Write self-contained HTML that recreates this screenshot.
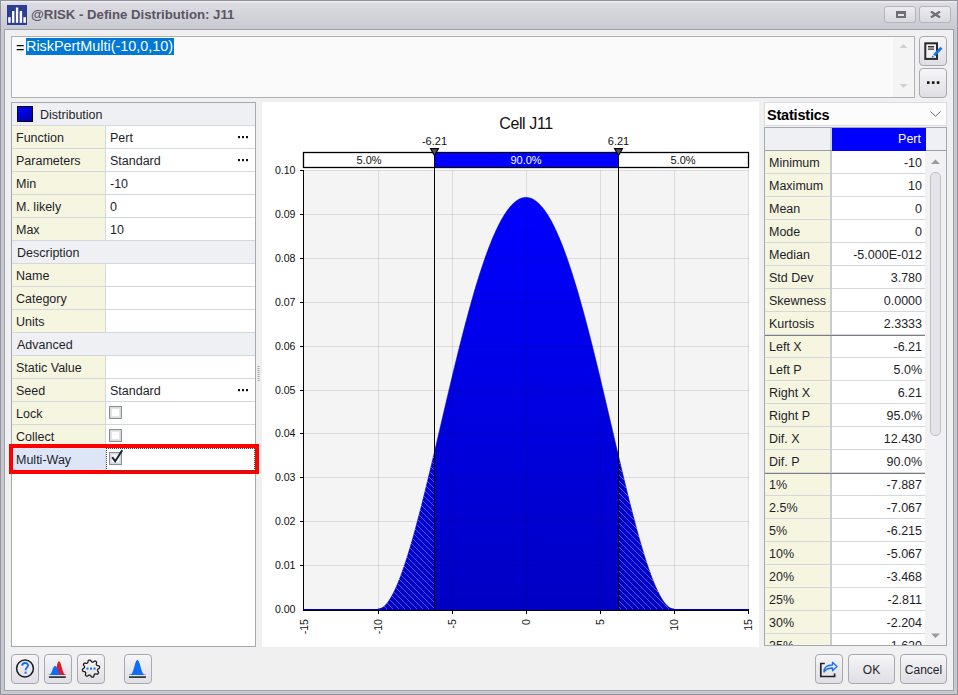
<!DOCTYPE html><html><head><meta charset="utf-8"><style>

*{box-sizing:border-box;margin:0;padding:0}
html,body{width:958px;height:695px;overflow:hidden;background:#c6c6ce}
body{font-family:"Liberation Sans",sans-serif;position:relative;color:#1e1e2a}
.a{position:absolute}
.t{position:absolute;white-space:nowrap;font-size:12.5px;line-height:23px}
.btn{position:absolute;border:1px solid #a8a8b0;border-radius:3px;background:linear-gradient(#f6f6f8,#dedee4)}

</style></head><body>
<div class="a" style="left:0;top:0;width:958px;height:695px;border:1px solid #92929c;background:linear-gradient(#ececf0 0px,#ececf0 1px,#dcdce2 2px,#c9c9d1 28px,#c8c8d0 30px,#c8c8d0 100%)"></div>
<div class="a" style="left:4px;top:29px;width:950px;height:662px;background:#f0f0f0;border:1px solid #a0a0ac"></div>
<svg class="a" style="left:7px;top:5px" width="20" height="20" viewBox="0 0 20 20"><rect width="20" height="20" fill="#2c3e94"/><rect x="1.2" y="12.2" width="2.5" height="5.6" fill="#fff"/><rect x="5" y="6" width="2.4" height="11.8" fill="#fff"/><rect x="8.9" y="2.5" width="2.3" height="15.3" fill="#fff"/><rect x="12.7" y="6" width="2.4" height="11.8" fill="#fff"/><rect x="16.4" y="12.2" width="2.5" height="5.6" fill="#fff"/></svg>
<div class="t" style="left:31px;top:4px;line-height:22px;font-size:13.2px;font-weight:bold;color:#5c5464">@RISK - Define Distribution: J11</div>
<div class="btn" style="left:884px;top:6px;width:32px;height:17px;border-radius:3px;border-color:#b4b4bc;background:linear-gradient(#ececf0,#d8d8de)"></div>
<div class="a" style="left:896px;top:11px;width:10px;height:7px;border:2px solid #6e6e78;border-top-width:3px"></div>
<div class="btn" style="left:919px;top:6px;width:32px;height:17px;border-color:#b4b4bc;background:linear-gradient(#ececf0,#d8d8de)"></div>
<svg class="a" style="left:930px;top:11px" width="11" height="7" viewBox="0 0 11 7"><path d="M1,0.5 L10,6.5 M10,0.5 L1,6.5" stroke="#6e6e78" stroke-width="2.3"/></svg>
<div class="a" style="left:11px;top:36px;width:904px;height:62px;background:#fafafa;border:1px solid #aeb0b8"></div>
<div class="a" style="left:893px;top:37px;width:21px;height:60px;background:#f4f4f4"></div>
<svg class="a" style="left:899px;top:43px" width="9" height="50"><path d="M0.5,5 L4.5,1 L8.5,5Z" fill="#d0d0d4"/><path d="M0.5,41 L4.5,45 L8.5,41Z" fill="#d0d0d4"/></svg>
<div class="t" style="left:16px;top:39px;height:18px;line-height:18px;font-size:14.4px;color:#000">=</div>
<div class="t" style="left:26px;top:38px;height:17px;line-height:17px;font-size:14.4px;color:#fff;background:#0078d7;padding-right:1px">RiskPertMulti(-10,0,10)</div>
<div class="btn" style="left:919px;top:36px;width:28px;height:30px;border-radius:4px"></div>
<svg class="a" style="left:923px;top:41px" width="20" height="20" viewBox="0 0 20 20"><rect x="2.3" y="2.3" width="11.7" height="15.6" fill="#f2f2f2" stroke="#2a2a2a" stroke-width="2"/><path d="M5,5.7 H11 M5,8.1 H11" stroke="#333" stroke-width="1.4"/><path d="M11.2,14.2 L18.4,6.8" stroke="#1a73e8" stroke-width="2.8"/><path d="M9.2,16.3 L10.4,15.1" stroke="#1a73e8" stroke-width="1.6"/></svg>
<div class="btn" style="left:919px;top:68px;width:28px;height:30px;border-radius:4px"></div>
<svg class="a" style="left:927px;top:81px" width="13" height="4"><rect x="0" y="0.3" width="2.6" height="2.6" fill="#111"/><rect x="4.9" y="0.3" width="2.6" height="2.6" fill="#111"/><rect x="9.8" y="0.3" width="2.6" height="2.6" fill="#111"/></svg>
<div class="a" style="left:11px;top:102px;width:245px;height:545px;background:#fff;border:1px solid #a4a8b2"></div>
<div class="a" style="left:12px;top:103px;width:243px;height:23px;background:#eef0f3;border-bottom:1px solid #d4d8de"></div>
<div class="t" style="left:40px;top:104px;height:22px;line-height:22px">Distribution</div>
<div class="a" style="left:17px;top:106px;width:16px;height:16px;border:1.5px solid #000;background:linear-gradient(135deg,#0000ff,#0000a8)"></div>
<div class="a" style="left:12px;top:126px;width:93px;height:23px;background:#f5f5e0;border-bottom:1px solid #d4d8de"></div>
<div class="a" style="left:105px;top:126px;width:1px;height:23px;background:#d4d8de"></div>
<div class="a" style="left:106px;top:126px;width:149px;height:23px;background:#fff;border-bottom:1px solid #d4d8de"></div>
<div class="t" style="left:16px;top:127px;height:22px;line-height:22px;color:#1e1e2a">Function</div>
<div class="t" style="left:110px;top:127px;height:22px;line-height:22px">Pert</div>
<svg class="a" style="left:236px;top:136px" width="13" height="3"><rect x="2" y="0" width="2" height="2.2" fill="#111"/><rect x="6" y="0" width="2" height="2.2" fill="#111"/><rect x="10" y="0" width="2" height="2.2" fill="#111"/></svg>
<div class="a" style="left:12px;top:149px;width:93px;height:23px;background:#f5f5e0;border-bottom:1px solid #d4d8de"></div>
<div class="a" style="left:105px;top:149px;width:1px;height:23px;background:#d4d8de"></div>
<div class="a" style="left:106px;top:149px;width:149px;height:23px;background:#fff;border-bottom:1px solid #d4d8de"></div>
<div class="t" style="left:16px;top:150px;height:22px;line-height:22px;color:#1e1e2a">Parameters</div>
<div class="t" style="left:110px;top:150px;height:22px;line-height:22px">Standard</div>
<svg class="a" style="left:236px;top:159px" width="13" height="3"><rect x="2" y="0" width="2" height="2.2" fill="#111"/><rect x="6" y="0" width="2" height="2.2" fill="#111"/><rect x="10" y="0" width="2" height="2.2" fill="#111"/></svg>
<div class="a" style="left:12px;top:172px;width:93px;height:23px;background:#f5f5e0;border-bottom:1px solid #d4d8de"></div>
<div class="a" style="left:105px;top:172px;width:1px;height:23px;background:#d4d8de"></div>
<div class="a" style="left:106px;top:172px;width:149px;height:23px;background:#fff;border-bottom:1px solid #d4d8de"></div>
<div class="t" style="left:16px;top:173px;height:22px;line-height:22px;color:#1e1e2a">Min</div>
<div class="t" style="left:110px;top:173px;height:22px;line-height:22px">-10</div>
<div class="a" style="left:12px;top:195px;width:93px;height:23px;background:#f5f5e0;border-bottom:1px solid #d4d8de"></div>
<div class="a" style="left:105px;top:195px;width:1px;height:23px;background:#d4d8de"></div>
<div class="a" style="left:106px;top:195px;width:149px;height:23px;background:#fff;border-bottom:1px solid #d4d8de"></div>
<div class="t" style="left:16px;top:196px;height:22px;line-height:22px;color:#1e1e2a">M. likely</div>
<div class="t" style="left:110px;top:196px;height:22px;line-height:22px">0</div>
<div class="a" style="left:12px;top:218px;width:93px;height:23px;background:#f5f5e0;border-bottom:1px solid #d4d8de"></div>
<div class="a" style="left:105px;top:218px;width:1px;height:23px;background:#d4d8de"></div>
<div class="a" style="left:106px;top:218px;width:149px;height:23px;background:#fff;border-bottom:1px solid #d4d8de"></div>
<div class="t" style="left:16px;top:219px;height:22px;line-height:22px;color:#1e1e2a">Max</div>
<div class="t" style="left:110px;top:219px;height:22px;line-height:22px">10</div>
<div class="a" style="left:12px;top:241px;width:243px;height:23px;background:#eef0f3;border-bottom:1px solid #d4d8de"></div>
<div class="t" style="left:17px;top:242px;height:22px;line-height:22px">Description</div>
<div class="a" style="left:12px;top:264px;width:93px;height:23px;background:#f5f5e0;border-bottom:1px solid #d4d8de"></div>
<div class="a" style="left:105px;top:264px;width:1px;height:23px;background:#d4d8de"></div>
<div class="a" style="left:106px;top:264px;width:149px;height:23px;background:#fff;border-bottom:1px solid #d4d8de"></div>
<div class="t" style="left:16px;top:265px;height:22px;line-height:22px;color:#1e1e2a">Name</div>
<div class="a" style="left:12px;top:287px;width:93px;height:23px;background:#f5f5e0;border-bottom:1px solid #d4d8de"></div>
<div class="a" style="left:105px;top:287px;width:1px;height:23px;background:#d4d8de"></div>
<div class="a" style="left:106px;top:287px;width:149px;height:23px;background:#fff;border-bottom:1px solid #d4d8de"></div>
<div class="t" style="left:16px;top:288px;height:22px;line-height:22px;color:#1e1e2a">Category</div>
<div class="a" style="left:12px;top:310px;width:93px;height:23px;background:#f5f5e0;border-bottom:1px solid #d4d8de"></div>
<div class="a" style="left:105px;top:310px;width:1px;height:23px;background:#d4d8de"></div>
<div class="a" style="left:106px;top:310px;width:149px;height:23px;background:#fff;border-bottom:1px solid #d4d8de"></div>
<div class="t" style="left:16px;top:311px;height:22px;line-height:22px;color:#1e1e2a">Units</div>
<div class="a" style="left:12px;top:333px;width:243px;height:23px;background:#eef0f3;border-bottom:1px solid #d4d8de"></div>
<div class="t" style="left:17px;top:334px;height:22px;line-height:22px">Advanced</div>
<div class="a" style="left:12px;top:356px;width:93px;height:23px;background:#f5f5e0;border-bottom:1px solid #d4d8de"></div>
<div class="a" style="left:105px;top:356px;width:1px;height:23px;background:#d4d8de"></div>
<div class="a" style="left:106px;top:356px;width:149px;height:23px;background:#fff;border-bottom:1px solid #d4d8de"></div>
<div class="t" style="left:16px;top:357px;height:22px;line-height:22px;color:#1e1e2a">Static Value</div>
<div class="a" style="left:12px;top:379px;width:93px;height:23px;background:#f5f5e0;border-bottom:1px solid #d4d8de"></div>
<div class="a" style="left:105px;top:379px;width:1px;height:23px;background:#d4d8de"></div>
<div class="a" style="left:106px;top:379px;width:149px;height:23px;background:#fff;border-bottom:1px solid #d4d8de"></div>
<div class="t" style="left:16px;top:380px;height:22px;line-height:22px;color:#1e1e2a">Seed</div>
<div class="t" style="left:110px;top:380px;height:22px;line-height:22px">Standard</div>
<svg class="a" style="left:236px;top:389px" width="13" height="3"><rect x="2" y="0" width="2" height="2.2" fill="#111"/><rect x="6" y="0" width="2" height="2.2" fill="#111"/><rect x="10" y="0" width="2" height="2.2" fill="#111"/></svg>
<div class="a" style="left:12px;top:402px;width:93px;height:23px;background:#f5f5e0;border-bottom:1px solid #d4d8de"></div>
<div class="a" style="left:105px;top:402px;width:1px;height:23px;background:#d4d8de"></div>
<div class="a" style="left:106px;top:402px;width:149px;height:23px;background:#fff;border-bottom:1px solid #d4d8de"></div>
<div class="t" style="left:16px;top:403px;height:22px;line-height:22px;color:#1e1e2a">Lock</div>
<div class="a" style="left:109px;top:406px;width:13px;height:13px;border:1px solid #8c8e98;background:#d8dae0"></div>
<div class="a" style="left:111px;top:408px;width:9px;height:9px;background:#fff;border:1px solid #e4e6ea"></div>
<div class="a" style="left:12px;top:425px;width:93px;height:23px;background:#f5f5e0;border-bottom:1px solid #d4d8de"></div>
<div class="a" style="left:105px;top:425px;width:1px;height:23px;background:#d4d8de"></div>
<div class="a" style="left:106px;top:425px;width:149px;height:23px;background:#fff;border-bottom:1px solid #d4d8de"></div>
<div class="t" style="left:16px;top:426px;height:22px;line-height:22px;color:#1e1e2a">Collect</div>
<div class="a" style="left:109px;top:429px;width:13px;height:13px;border:1px solid #8c8e98;background:#d8dae0"></div>
<div class="a" style="left:111px;top:431px;width:9px;height:9px;background:#fff;border:1px solid #e4e6ea"></div>
<div class="a" style="left:12px;top:448px;width:93px;height:23px;background:#dde6f6;border-bottom:1px solid #d4d8de"></div>
<div class="a" style="left:105px;top:448px;width:1px;height:23px;background:#d4d8de"></div>
<div class="a" style="left:106px;top:448px;width:149px;height:23px;background:#fff;border-bottom:1px solid #d4d8de"></div>
<div class="t" style="left:16px;top:449px;height:22px;line-height:22px;color:#1e1e2a">Multi-Way</div>
<div class="a" style="left:109px;top:452px;width:13px;height:13px;border:1px solid #8c8e98;background:#d8dae0"></div>
<div class="a" style="left:111px;top:454px;width:9px;height:9px;background:#fff;border:1px solid #e4e6ea"></div>
<svg class="a" style="left:109px;top:449px" width="15" height="15"><path d="M3.2,8.2 L6.2,12.3 L13.2,1.2" fill="none" stroke="#1c2440" stroke-width="2"/></svg>
<div class="a" style="left:9px;top:444px;width:250px;height:30px;border:4px solid #ff0000"></div>
<div class="a" style="left:106px;top:448px;width:149px;height:23px;border:1px dotted #444"></div>
<svg class="a" style="left:257px;top:366px" width="3" height="16"><rect x="0.5" y="0" width="2" height="1" fill="#a0a0a8"/><rect x="0.5" y="2" width="2" height="1" fill="#a0a0a8"/><rect x="0.5" y="4" width="2" height="1" fill="#a0a0a8"/><rect x="0.5" y="6" width="2" height="1" fill="#a0a0a8"/><rect x="0.5" y="8" width="2" height="1" fill="#a0a0a8"/><rect x="0.5" y="10" width="2" height="1" fill="#a0a0a8"/><rect x="0.5" y="12" width="2" height="1" fill="#a0a0a8"/><rect x="0.5" y="14" width="2" height="1" fill="#a0a0a8"/></svg>
<div class="a" style="left:262px;top:102px;width:497px;height:545px;background:#fff"></div>
<svg class="a" style="left:0;top:0" width="958" height="695" viewBox="0 0 958 695"><defs><linearGradient id="fg" gradientUnits="userSpaceOnUse" x1="0" y1="198" x2="0" y2="609"><stop offset="0" stop-color="#0000ff"/><stop offset="1" stop-color="#0000c4"/></linearGradient><pattern id="hp" patternUnits="userSpaceOnUse" x="0" y="0" width="6" height="6"><rect x="0" y="0" width="1" height="1" fill="rgba(255,255,255,0.32)"/><rect x="1" y="1" width="1" height="1" fill="rgba(255,255,255,0.32)"/><rect x="2" y="2" width="1" height="1" fill="rgba(255,255,255,0.32)"/><rect x="3" y="3" width="1" height="1" fill="rgba(255,255,255,0.32)"/><rect x="4" y="4" width="1" height="1" fill="rgba(255,255,255,0.32)"/><rect x="5" y="5" width="1" height="1" fill="rgba(255,255,255,0.32)"/></pattern></defs><rect x="304" y="170" width="445" height="440" fill="#f4f4f4"/><path d="M378.00,609 L378.00,609.00 L378.59,608.97 L379.18,608.90 L379.78,608.77 L380.37,608.59 L380.96,608.35 L381.55,608.07 L382.14,607.75 L382.74,607.37 L383.33,606.94 L383.92,606.47 L384.51,605.95 L385.10,605.39 L385.70,604.78 L386.29,604.12 L386.88,603.42 L387.47,602.68 L388.06,601.90 L388.66,601.07 L389.25,600.20 L389.84,599.29 L390.43,598.34 L391.02,597.35 L391.62,596.32 L392.21,595.25 L392.80,594.14 L393.39,593.00 L393.98,591.82 L394.58,590.60 L395.17,589.34 L395.76,588.05 L396.35,586.73 L396.94,585.37 L397.54,583.98 L398.13,582.55 L398.72,581.09 L399.31,579.60 L399.90,578.08 L400.50,576.53 L401.09,574.94 L401.68,573.33 L402.27,571.69 L402.86,570.01 L403.46,568.31 L404.05,566.59 L404.64,564.83 L405.23,563.05 L405.82,561.24 L406.42,559.41 L407.01,557.55 L407.60,555.66 L408.19,553.75 L408.78,551.82 L409.38,549.87 L409.97,547.89 L410.56,545.89 L411.15,543.86 L411.74,541.82 L412.34,539.76 L412.93,537.67 L413.52,535.57 L414.11,533.44 L414.70,531.30 L415.30,529.14 L415.89,526.96 L416.48,524.77 L417.07,522.55 L417.66,520.33 L418.26,518.08 L418.85,515.82 L419.44,513.54 L420.03,511.25 L420.62,508.95 L421.22,506.63 L421.81,504.30 L422.40,501.95 L422.99,499.60 L423.58,497.23 L424.18,494.85 L424.77,492.45 L425.36,490.05 L425.95,487.64 L426.54,485.22 L427.14,482.79 L427.73,480.35 L428.32,477.90 L428.91,475.44 L429.50,472.98 L430.10,470.50 L430.69,468.03 L431.28,465.54 L431.87,463.05 L432.46,460.55 L433.06,458.05 L433.65,455.54 L434.24,453.03 L434.83,450.52 L435.42,448.00 L436.02,445.48 L436.61,442.95 L437.20,440.42 L437.79,437.89 L438.38,435.36 L438.98,432.83 L439.57,430.30 L440.16,427.76 L440.75,425.23 L441.34,422.69 L441.94,420.16 L442.53,417.63 L443.12,415.09 L443.71,412.56 L444.30,410.04 L444.90,407.51 L445.49,404.99 L446.08,402.47 L446.67,399.95 L447.26,397.43 L447.86,394.92 L448.45,392.42 L449.04,389.92 L449.63,387.42 L450.22,384.93 L450.82,382.45 L451.41,379.97 L452.00,377.50 L452.59,375.03 L453.18,372.57 L453.78,370.12 L454.37,367.67 L454.96,365.24 L455.55,362.81 L456.14,360.39 L456.74,357.98 L457.33,355.58 L457.92,353.18 L458.51,350.80 L459.10,348.43 L459.70,346.06 L460.29,343.71 L460.88,341.37 L461.47,339.04 L462.06,336.72 L462.66,334.41 L463.25,332.11 L463.84,329.83 L464.43,327.56 L465.02,325.30 L465.62,323.05 L466.21,320.82 L466.80,318.60 L467.39,316.40 L467.98,314.20 L468.58,312.03 L469.17,309.86 L469.76,307.72 L470.35,305.58 L470.94,303.46 L471.54,301.36 L472.13,299.27 L472.72,297.20 L473.31,295.15 L473.90,293.11 L474.50,291.09 L475.09,289.08 L475.68,287.09 L476.27,285.12 L476.86,283.17 L477.46,281.23 L478.05,279.31 L478.64,277.41 L479.23,275.53 L479.82,273.66 L480.42,271.82 L481.01,269.99 L481.60,268.19 L482.19,266.40 L482.78,264.63 L483.38,262.88 L483.97,261.15 L484.56,259.44 L485.15,257.75 L485.74,256.08 L486.34,254.43 L486.93,252.81 L487.52,251.20 L488.11,249.61 L488.70,248.05 L489.30,246.51 L489.89,244.98 L490.48,243.48 L491.07,242.01 L491.66,240.55 L492.26,239.11 L492.85,237.70 L493.44,236.31 L494.03,234.95 L494.62,233.60 L495.22,232.28 L495.81,230.98 L496.40,229.70 L496.99,228.45 L497.58,227.22 L498.18,226.02 L498.77,224.83 L499.36,223.67 L499.95,222.54 L500.54,221.43 L501.14,220.34 L501.73,219.28 L502.32,218.24 L502.91,217.23 L503.50,216.24 L504.10,215.27 L504.69,214.33 L505.28,213.41 L505.87,212.52 L506.46,211.65 L507.06,210.81 L507.65,210.00 L508.24,209.21 L508.83,208.44 L509.42,207.70 L510.02,206.98 L510.61,206.29 L511.20,205.63 L511.79,204.99 L512.38,204.37 L512.98,203.79 L513.57,203.22 L514.16,202.69 L514.75,202.18 L515.34,201.69 L515.94,201.23 L516.53,200.80 L517.12,200.40 L517.71,200.01 L518.30,199.66 L518.90,199.33 L519.49,199.03 L520.08,198.75 L520.67,198.50 L521.26,198.28 L521.86,198.08 L522.45,197.91 L523.04,197.77 L523.63,197.65 L524.22,197.56 L524.82,197.49 L525.41,197.45 L526.00,197.44 L526.59,197.45 L527.18,197.49 L527.78,197.56 L528.37,197.65 L528.96,197.77 L529.55,197.91 L530.14,198.08 L530.74,198.28 L531.33,198.50 L531.92,198.75 L532.51,199.03 L533.10,199.33 L533.70,199.66 L534.29,200.01 L534.88,200.40 L535.47,200.80 L536.06,201.23 L536.66,201.69 L537.25,202.18 L537.84,202.69 L538.43,203.22 L539.02,203.79 L539.62,204.37 L540.21,204.99 L540.80,205.63 L541.39,206.29 L541.98,206.98 L542.58,207.70 L543.17,208.44 L543.76,209.21 L544.35,210.00 L544.94,210.81 L545.54,211.65 L546.13,212.52 L546.72,213.41 L547.31,214.33 L547.90,215.27 L548.50,216.24 L549.09,217.23 L549.68,218.24 L550.27,219.28 L550.86,220.34 L551.46,221.43 L552.05,222.54 L552.64,223.67 L553.23,224.83 L553.82,226.02 L554.42,227.22 L555.01,228.45 L555.60,229.70 L556.19,230.98 L556.78,232.28 L557.38,233.60 L557.97,234.95 L558.56,236.31 L559.15,237.70 L559.74,239.11 L560.34,240.55 L560.93,242.01 L561.52,243.48 L562.11,244.98 L562.70,246.51 L563.30,248.05 L563.89,249.61 L564.48,251.20 L565.07,252.81 L565.66,254.43 L566.26,256.08 L566.85,257.75 L567.44,259.44 L568.03,261.15 L568.62,262.88 L569.22,264.63 L569.81,266.40 L570.40,268.19 L570.99,269.99 L571.58,271.82 L572.18,273.66 L572.77,275.53 L573.36,277.41 L573.95,279.31 L574.54,281.23 L575.14,283.17 L575.73,285.12 L576.32,287.09 L576.91,289.08 L577.50,291.09 L578.10,293.11 L578.69,295.15 L579.28,297.20 L579.87,299.27 L580.46,301.36 L581.06,303.46 L581.65,305.58 L582.24,307.72 L582.83,309.86 L583.42,312.03 L584.02,314.20 L584.61,316.40 L585.20,318.60 L585.79,320.82 L586.38,323.05 L586.98,325.30 L587.57,327.56 L588.16,329.83 L588.75,332.11 L589.34,334.41 L589.94,336.72 L590.53,339.04 L591.12,341.37 L591.71,343.71 L592.30,346.06 L592.90,348.43 L593.49,350.80 L594.08,353.18 L594.67,355.58 L595.26,357.98 L595.86,360.39 L596.45,362.81 L597.04,365.24 L597.63,367.67 L598.22,370.12 L598.82,372.57 L599.41,375.03 L600.00,377.50 L600.59,379.97 L601.18,382.45 L601.78,384.93 L602.37,387.42 L602.96,389.92 L603.55,392.42 L604.14,394.92 L604.74,397.43 L605.33,399.95 L605.92,402.47 L606.51,404.99 L607.10,407.51 L607.70,410.04 L608.29,412.56 L608.88,415.09 L609.47,417.63 L610.06,420.16 L610.66,422.69 L611.25,425.23 L611.84,427.76 L612.43,430.30 L613.02,432.83 L613.62,435.36 L614.21,437.89 L614.80,440.42 L615.39,442.95 L615.98,445.48 L616.58,448.00 L617.17,450.52 L617.76,453.03 L618.35,455.54 L618.94,458.05 L619.54,460.55 L620.13,463.05 L620.72,465.54 L621.31,468.03 L621.90,470.50 L622.50,472.98 L623.09,475.44 L623.68,477.90 L624.27,480.35 L624.86,482.79 L625.46,485.22 L626.05,487.64 L626.64,490.05 L627.23,492.45 L627.82,494.85 L628.42,497.23 L629.01,499.60 L629.60,501.95 L630.19,504.30 L630.78,506.63 L631.38,508.95 L631.97,511.25 L632.56,513.54 L633.15,515.82 L633.74,518.08 L634.34,520.33 L634.93,522.55 L635.52,524.77 L636.11,526.96 L636.70,529.14 L637.30,531.30 L637.89,533.44 L638.48,535.57 L639.07,537.67 L639.66,539.76 L640.26,541.82 L640.85,543.86 L641.44,545.89 L642.03,547.89 L642.62,549.87 L643.22,551.82 L643.81,553.75 L644.40,555.66 L644.99,557.55 L645.58,559.41 L646.18,561.24 L646.77,563.05 L647.36,564.83 L647.95,566.59 L648.54,568.31 L649.14,570.01 L649.73,571.69 L650.32,573.33 L650.91,574.94 L651.50,576.53 L652.10,578.08 L652.69,579.60 L653.28,581.09 L653.87,582.55 L654.46,583.98 L655.06,585.37 L655.65,586.73 L656.24,588.05 L656.83,589.34 L657.42,590.60 L658.02,591.82 L658.61,593.00 L659.20,594.14 L659.79,595.25 L660.38,596.32 L660.98,597.35 L661.57,598.34 L662.16,599.29 L662.75,600.20 L663.34,601.07 L663.94,601.90 L664.53,602.68 L665.12,603.42 L665.71,604.12 L666.30,604.78 L666.90,605.39 L667.49,605.95 L668.08,606.47 L668.67,606.94 L669.26,607.37 L669.86,607.75 L670.45,608.07 L671.04,608.35 L671.63,608.59 L672.22,608.77 L672.82,608.90 L673.41,608.97 L674.00,609.00 L674.00,609 Z" fill="url(#fg)" stroke="#0000b0" stroke-width="0.6"/><path d="M378.00,609 L378.00,609.00 L378.47,608.98 L378.93,608.93 L379.40,608.85 L379.87,608.74 L380.34,608.60 L380.80,608.42 L381.27,608.21 L381.74,607.98 L382.21,607.71 L382.67,607.41 L383.14,607.08 L383.61,606.72 L384.08,606.34 L384.54,605.92 L385.01,605.48 L385.48,605.01 L385.95,604.51 L386.41,603.98 L386.88,603.42 L387.35,602.84 L387.82,602.23 L388.28,601.59 L388.75,600.93 L389.22,600.24 L389.69,599.53 L390.15,598.79 L390.62,598.03 L391.09,597.24 L391.56,596.43 L392.02,595.59 L392.49,594.73 L392.96,593.84 L393.43,592.93 L393.89,592.00 L394.36,591.05 L394.83,590.07 L395.30,589.07 L395.76,588.05 L396.23,587.00 L396.70,585.94 L397.16,584.85 L397.63,583.75 L398.10,582.62 L398.57,581.47 L399.03,580.30 L399.50,579.12 L399.97,577.91 L400.44,576.68 L400.90,575.44 L401.37,574.17 L401.84,572.89 L402.31,571.59 L402.77,570.27 L403.24,568.93 L403.71,567.58 L404.18,566.21 L404.64,564.82 L405.11,563.41 L405.58,561.99 L406.05,560.55 L406.51,559.10 L406.98,557.63 L407.45,556.15 L407.92,554.65 L408.38,553.13 L408.85,551.60 L409.32,550.06 L409.79,548.50 L410.25,546.93 L410.72,545.34 L411.19,543.74 L411.66,542.13 L412.12,540.50 L412.59,538.86 L413.06,537.21 L413.52,535.55 L413.99,533.88 L414.46,532.19 L414.93,530.49 L415.39,528.78 L415.86,527.06 L416.33,525.33 L416.80,523.58 L417.26,521.83 L417.73,520.07 L418.20,518.30 L418.67,516.51 L419.13,514.72 L419.60,512.92 L420.07,511.11 L420.54,509.29 L421.00,507.46 L421.47,505.62 L421.94,503.78 L422.41,501.93 L422.87,500.07 L423.34,498.20 L423.81,496.33 L424.28,494.44 L424.74,492.55 L425.21,490.66 L425.68,488.76 L426.15,486.85 L426.61,484.94 L427.08,483.02 L427.55,481.09 L428.02,479.16 L428.48,477.22 L428.95,475.28 L429.42,473.34 L429.89,471.39 L430.35,469.43 L430.82,467.47 L431.29,465.51 L431.75,463.54 L432.22,461.57 L432.69,459.60 L433.16,457.62 L433.62,455.64 L434.09,453.66 L434.09,609 Z" fill="url(#hp)" shape-rendering="crispEdges"/><path d="M617.91,609 L617.91,453.66 L618.38,455.64 L618.84,457.62 L619.31,459.60 L619.78,461.57 L620.25,463.54 L620.71,465.51 L621.18,467.47 L621.65,469.43 L622.11,471.39 L622.58,473.34 L623.05,475.28 L623.52,477.22 L623.98,479.16 L624.45,481.09 L624.92,483.02 L625.39,484.94 L625.85,486.85 L626.32,488.76 L626.79,490.66 L627.26,492.55 L627.72,494.44 L628.19,496.33 L628.66,498.20 L629.13,500.07 L629.59,501.93 L630.06,503.78 L630.53,505.62 L631.00,507.46 L631.46,509.29 L631.93,511.11 L632.40,512.92 L632.87,514.72 L633.33,516.51 L633.80,518.30 L634.27,520.07 L634.74,521.83 L635.20,523.58 L635.67,525.33 L636.14,527.06 L636.61,528.78 L637.07,530.49 L637.54,532.19 L638.01,533.88 L638.48,535.55 L638.94,537.21 L639.41,538.86 L639.88,540.50 L640.34,542.13 L640.81,543.74 L641.28,545.34 L641.75,546.93 L642.21,548.50 L642.68,550.06 L643.15,551.60 L643.62,553.13 L644.08,554.65 L644.55,556.15 L645.02,557.63 L645.49,559.10 L645.95,560.55 L646.42,561.99 L646.89,563.41 L647.36,564.82 L647.82,566.21 L648.29,567.58 L648.76,568.93 L649.23,570.27 L649.69,571.59 L650.16,572.89 L650.63,574.17 L651.10,575.44 L651.56,576.68 L652.03,577.91 L652.50,579.12 L652.97,580.30 L653.43,581.47 L653.90,582.62 L654.37,583.75 L654.84,584.85 L655.30,585.94 L655.77,587.00 L656.24,588.05 L656.70,589.07 L657.17,590.07 L657.64,591.05 L658.11,592.00 L658.57,592.93 L659.04,593.84 L659.51,594.73 L659.98,595.59 L660.44,596.43 L660.91,597.24 L661.38,598.03 L661.85,598.79 L662.31,599.53 L662.78,600.24 L663.25,600.93 L663.72,601.59 L664.18,602.23 L664.65,602.84 L665.12,603.42 L665.59,603.98 L666.05,604.51 L666.52,605.01 L666.99,605.48 L667.46,605.92 L667.92,606.34 L668.39,606.72 L668.86,607.08 L669.33,607.41 L669.79,607.71 L670.26,607.98 L670.73,608.21 L671.20,608.42 L671.66,608.60 L672.13,608.74 L672.60,608.85 L673.07,608.93 L673.53,608.98 L674.00,609.00 L674.00,609 Z" fill="url(#hp)" shape-rendering="crispEdges"/><g fill="rgba(0,0,0,0.10)" shape-rendering="crispEdges"><rect x="378" y="170" width="1" height="439"/><rect x="452" y="170" width="1" height="439"/><rect x="526" y="170" width="1" height="439"/><rect x="600" y="170" width="1" height="439"/><rect x="674" y="170" width="1" height="439"/><rect x="748" y="170" width="1" height="439"/><rect x="304" y="565" width="445" height="1"/><rect x="304" y="521" width="445" height="1"/><rect x="304" y="477" width="445" height="1"/><rect x="304" y="433" width="445" height="1"/><rect x="304" y="390" width="445" height="1"/><rect x="304" y="346" width="445" height="1"/><rect x="304" y="302" width="445" height="1"/><rect x="304" y="258" width="445" height="1"/><rect x="304" y="214" width="445" height="1"/><rect x="304" y="170" width="445" height="1"/></g><rect x="304" y="609" width="445" height="1" fill="#0000c0"/><g fill="#000" shape-rendering="crispEdges"><rect x="303" y="170" width="1" height="441"/><rect x="303" y="610" width="446" height="1"/><rect x="300" y="565" width="3" height="1"/><rect x="300" y="521" width="3" height="1"/><rect x="300" y="477" width="3" height="1"/><rect x="300" y="433" width="3" height="1"/><rect x="300" y="390" width="3" height="1"/><rect x="300" y="346" width="3" height="1"/><rect x="300" y="302" width="3" height="1"/><rect x="300" y="258" width="3" height="1"/><rect x="300" y="214" width="3" height="1"/><rect x="300" y="170" width="3" height="1"/><rect x="378" y="611" width="1" height="3"/><rect x="452" y="611" width="1" height="3"/><rect x="526" y="611" width="1" height="3"/><rect x="600" y="611" width="1" height="3"/><rect x="674" y="611" width="1" height="3"/><rect x="748" y="611" width="1" height="3"/><rect x="434" y="152" width="1" height="458"/><rect x="618" y="152" width="1" height="458"/></g><text x="295.5" y="613.3" font-size="10.6" text-anchor="end" font-family="Liberation Sans" fill="#111">0.00</text><text x="295.5" y="569.3" font-size="10.6" text-anchor="end" font-family="Liberation Sans" fill="#111">0.01</text><text x="295.5" y="525.3" font-size="10.6" text-anchor="end" font-family="Liberation Sans" fill="#111">0.02</text><text x="295.5" y="481.3" font-size="10.6" text-anchor="end" font-family="Liberation Sans" fill="#111">0.03</text><text x="295.5" y="437.3" font-size="10.6" text-anchor="end" font-family="Liberation Sans" fill="#111">0.04</text><text x="295.5" y="394.3" font-size="10.6" text-anchor="end" font-family="Liberation Sans" fill="#111">0.05</text><text x="295.5" y="350.3" font-size="10.6" text-anchor="end" font-family="Liberation Sans" fill="#111">0.06</text><text x="295.5" y="306.3" font-size="10.6" text-anchor="end" font-family="Liberation Sans" fill="#111">0.07</text><text x="295.5" y="262.3" font-size="10.6" text-anchor="end" font-family="Liberation Sans" fill="#111">0.08</text><text x="295.5" y="218.3" font-size="10.6" text-anchor="end" font-family="Liberation Sans" fill="#111">0.09</text><text x="295.5" y="174.3" font-size="10.6" text-anchor="end" font-family="Liberation Sans" fill="#111">0.10</text><text transform="translate(308.3,619) rotate(-90)" x="0" y="0" font-size="10.6" text-anchor="end" font-family="Liberation Sans" fill="#111">-15</text><text transform="translate(382.3,619) rotate(-90)" x="0" y="0" font-size="10.6" text-anchor="end" font-family="Liberation Sans" fill="#111">-10</text><text transform="translate(456.3,619) rotate(-90)" x="0" y="0" font-size="10.6" text-anchor="end" font-family="Liberation Sans" fill="#111">-5</text><text transform="translate(530.3,619) rotate(-90)" x="0" y="0" font-size="10.6" text-anchor="end" font-family="Liberation Sans" fill="#111">0</text><text transform="translate(604.3,619) rotate(-90)" x="0" y="0" font-size="10.6" text-anchor="end" font-family="Liberation Sans" fill="#111">5</text><text transform="translate(678.3,619) rotate(-90)" x="0" y="0" font-size="10.6" text-anchor="end" font-family="Liberation Sans" fill="#111">10</text><text transform="translate(752.3,619) rotate(-90)" x="0" y="0" font-size="10.6" text-anchor="end" font-family="Liberation Sans" fill="#111">15</text><rect x="303.5" y="152.5" width="445" height="15" fill="#fff" stroke="#000" stroke-width="1.3"/><rect x="434" y="153" width="184" height="14" fill="#0000ff"/><rect x="434" y="152" width="1" height="16" fill="#000"/><rect x="618" y="152" width="1" height="16" fill="#000"/><text x="369.0" y="164" font-size="11" text-anchor="middle" font-family="Liberation Sans" fill="#111">5.0%</text><text x="526.0" y="164" font-size="11" text-anchor="middle" font-family="Liberation Sans" fill="#fff">90.0%</text><text x="683.0" y="164" font-size="11" text-anchor="middle" font-family="Liberation Sans" fill="#111">5.0%</text><path d="M430.5,148.6 L438.5,148.6 L434.5,155.6Z" fill="#555" stroke="#000" stroke-width="1.1" stroke-linejoin="miter"/><path d="M614.5,148.6 L622.5,148.6 L618.5,155.6Z" fill="#555" stroke="#000" stroke-width="1.1" stroke-linejoin="miter"/><text x="434.5" y="145" font-size="11" text-anchor="middle" font-family="Liberation Sans" fill="#111">-6.21</text><text x="618.5" y="145" font-size="11" text-anchor="middle" font-family="Liberation Sans" fill="#111">6.21</text><text x="526" y="129" font-size="16" letter-spacing="-0.4" text-anchor="middle" font-family="Liberation Sans" fill="#111">Cell J11</text></svg>
<div class="a" style="left:764px;top:102px;width:183px;height:24px;background:#fcfcfc;border:1px solid #dcdce0"></div>
<div class="t" style="left:767px;top:103px;height:24px;line-height:24px;font-size:14.5px;letter-spacing:-0.2px;font-weight:bold;color:#000">Statistics</div>
<svg class="a" style="left:930px;top:111px" width="11" height="6"><path d="M0.5,0.5 L5.5,5.3 L10.5,0.5" fill="none" stroke="#555" stroke-width="0.9"/></svg>
<div class="a" style="left:764px;top:127px;width:183px;height:519px;background:#eef0f3;border:1px solid #a4a8b2;overflow:hidden">
<div class="a" style="left:0;top:0;width:181px;height:23px;background:#eef0f3;border-bottom:1px solid #9c9ea6"></div>
<div class="a" style="left:65px;top:0;width:2px;height:22px;background:#cdd0d6"></div>
<div class="a" style="left:67px;top:0;width:94px;height:23px;background:#0000ff"></div>
<div class="t" style="right:25px;top:0px;height:23px;line-height:23px;color:#fff;text-align:right">Pert</div>
<div class="a" style="left:0;top:23px;width:65px;height:23px;background:#f5f5e0;border-bottom:1px solid #d4d8de"></div>
<div class="a" style="left:65px;top:23px;width:2px;height:23px;background:#c8ccd2"></div>
<div class="a" style="left:67px;top:23px;width:93px;height:23px;background:#fff;border-bottom:1px solid #d4d8de"></div>
<div class="t" style="left:4px;top:24px;height:23px;line-height:23px">Minimum</div>
<div class="t" style="left:67px;width:90px;text-align:right;top:24px;height:23px;line-height:23px">-10</div>
<div class="a" style="left:0;top:46px;width:65px;height:23px;background:#f5f5e0;border-bottom:1px solid #d4d8de"></div>
<div class="a" style="left:65px;top:46px;width:2px;height:23px;background:#c8ccd2"></div>
<div class="a" style="left:67px;top:46px;width:93px;height:23px;background:#fff;border-bottom:1px solid #d4d8de"></div>
<div class="t" style="left:4px;top:47px;height:23px;line-height:23px">Maximum</div>
<div class="t" style="left:67px;width:90px;text-align:right;top:47px;height:23px;line-height:23px">10</div>
<div class="a" style="left:0;top:69px;width:65px;height:23px;background:#f5f5e0;border-bottom:1px solid #d4d8de"></div>
<div class="a" style="left:65px;top:69px;width:2px;height:23px;background:#c8ccd2"></div>
<div class="a" style="left:67px;top:69px;width:93px;height:23px;background:#fff;border-bottom:1px solid #d4d8de"></div>
<div class="t" style="left:4px;top:70px;height:23px;line-height:23px">Mean</div>
<div class="t" style="left:67px;width:90px;text-align:right;top:70px;height:23px;line-height:23px">0</div>
<div class="a" style="left:0;top:92px;width:65px;height:23px;background:#f5f5e0;border-bottom:1px solid #d4d8de"></div>
<div class="a" style="left:65px;top:92px;width:2px;height:23px;background:#c8ccd2"></div>
<div class="a" style="left:67px;top:92px;width:93px;height:23px;background:#fff;border-bottom:1px solid #d4d8de"></div>
<div class="t" style="left:4px;top:93px;height:23px;line-height:23px">Mode</div>
<div class="t" style="left:67px;width:90px;text-align:right;top:93px;height:23px;line-height:23px">0</div>
<div class="a" style="left:0;top:115px;width:65px;height:23px;background:#f5f5e0;border-bottom:1px solid #d4d8de"></div>
<div class="a" style="left:65px;top:115px;width:2px;height:23px;background:#c8ccd2"></div>
<div class="a" style="left:67px;top:115px;width:93px;height:23px;background:#fff;border-bottom:1px solid #d4d8de"></div>
<div class="t" style="left:4px;top:116px;height:23px;line-height:23px">Median</div>
<div class="t" style="left:67px;width:90px;text-align:right;top:116px;height:23px;line-height:23px">-5.000E-012</div>
<div class="a" style="left:0;top:138px;width:65px;height:23px;background:#f5f5e0;border-bottom:1px solid #d4d8de"></div>
<div class="a" style="left:65px;top:138px;width:2px;height:23px;background:#c8ccd2"></div>
<div class="a" style="left:67px;top:138px;width:93px;height:23px;background:#fff;border-bottom:1px solid #d4d8de"></div>
<div class="t" style="left:4px;top:139px;height:23px;line-height:23px">Std Dev</div>
<div class="t" style="left:67px;width:90px;text-align:right;top:139px;height:23px;line-height:23px">3.780</div>
<div class="a" style="left:0;top:161px;width:65px;height:23px;background:#f5f5e0;border-bottom:1px solid #d4d8de"></div>
<div class="a" style="left:65px;top:161px;width:2px;height:23px;background:#c8ccd2"></div>
<div class="a" style="left:67px;top:161px;width:93px;height:23px;background:#fff;border-bottom:1px solid #d4d8de"></div>
<div class="t" style="left:4px;top:162px;height:23px;line-height:23px">Skewness</div>
<div class="t" style="left:67px;width:90px;text-align:right;top:162px;height:23px;line-height:23px">0.0000</div>
<div class="a" style="left:0;top:184px;width:65px;height:23px;background:#f5f5e0;border-bottom:1px solid #d4d8de"></div>
<div class="a" style="left:65px;top:184px;width:2px;height:23px;background:#c8ccd2"></div>
<div class="a" style="left:67px;top:184px;width:93px;height:23px;background:#fff;border-bottom:1px solid #d4d8de"></div>
<div class="t" style="left:4px;top:185px;height:23px;line-height:23px">Kurtosis</div>
<div class="t" style="left:67px;width:90px;text-align:right;top:185px;height:23px;line-height:23px">2.3333</div>
<div class="a" style="left:0;top:207px;width:65px;height:23px;background:#f5f5e0;border-bottom:1px solid #d4d8de"></div>
<div class="a" style="left:65px;top:207px;width:2px;height:23px;background:#c8ccd2"></div>
<div class="a" style="left:67px;top:207px;width:93px;height:23px;background:#fff;border-bottom:1px solid #d4d8de"></div>
<div class="t" style="left:4px;top:208px;height:23px;line-height:23px">Left X</div>
<div class="t" style="left:67px;width:90px;text-align:right;top:208px;height:23px;line-height:23px">-6.21</div>
<div class="a" style="left:0;top:230px;width:65px;height:23px;background:#f5f5e0;border-bottom:1px solid #d4d8de"></div>
<div class="a" style="left:65px;top:230px;width:2px;height:23px;background:#c8ccd2"></div>
<div class="a" style="left:67px;top:230px;width:93px;height:23px;background:#fff;border-bottom:1px solid #d4d8de"></div>
<div class="t" style="left:4px;top:231px;height:23px;line-height:23px">Left P</div>
<div class="t" style="left:67px;width:90px;text-align:right;top:231px;height:23px;line-height:23px">5.0%</div>
<div class="a" style="left:0;top:253px;width:65px;height:23px;background:#f5f5e0;border-bottom:1px solid #d4d8de"></div>
<div class="a" style="left:65px;top:253px;width:2px;height:23px;background:#c8ccd2"></div>
<div class="a" style="left:67px;top:253px;width:93px;height:23px;background:#fff;border-bottom:1px solid #d4d8de"></div>
<div class="t" style="left:4px;top:254px;height:23px;line-height:23px">Right X</div>
<div class="t" style="left:67px;width:90px;text-align:right;top:254px;height:23px;line-height:23px">6.21</div>
<div class="a" style="left:0;top:276px;width:65px;height:23px;background:#f5f5e0;border-bottom:1px solid #d4d8de"></div>
<div class="a" style="left:65px;top:276px;width:2px;height:23px;background:#c8ccd2"></div>
<div class="a" style="left:67px;top:276px;width:93px;height:23px;background:#fff;border-bottom:1px solid #d4d8de"></div>
<div class="t" style="left:4px;top:277px;height:23px;line-height:23px">Right P</div>
<div class="t" style="left:67px;width:90px;text-align:right;top:277px;height:23px;line-height:23px">95.0%</div>
<div class="a" style="left:0;top:299px;width:65px;height:23px;background:#f5f5e0;border-bottom:1px solid #d4d8de"></div>
<div class="a" style="left:65px;top:299px;width:2px;height:23px;background:#c8ccd2"></div>
<div class="a" style="left:67px;top:299px;width:93px;height:23px;background:#fff;border-bottom:1px solid #d4d8de"></div>
<div class="t" style="left:4px;top:300px;height:23px;line-height:23px">Dif. X</div>
<div class="t" style="left:67px;width:90px;text-align:right;top:300px;height:23px;line-height:23px">12.430</div>
<div class="a" style="left:0;top:322px;width:65px;height:23px;background:#f5f5e0;border-bottom:1px solid #d4d8de"></div>
<div class="a" style="left:65px;top:322px;width:2px;height:23px;background:#c8ccd2"></div>
<div class="a" style="left:67px;top:322px;width:93px;height:23px;background:#fff;border-bottom:1px solid #d4d8de"></div>
<div class="t" style="left:4px;top:323px;height:23px;line-height:23px">Dif. P</div>
<div class="t" style="left:67px;width:90px;text-align:right;top:323px;height:23px;line-height:23px">90.0%</div>
<div class="a" style="left:0;top:345px;width:65px;height:23px;background:#f5f5e0;border-bottom:1px solid #d4d8de"></div>
<div class="a" style="left:65px;top:345px;width:2px;height:23px;background:#c8ccd2"></div>
<div class="a" style="left:67px;top:345px;width:93px;height:23px;background:#fff;border-bottom:1px solid #d4d8de"></div>
<div class="t" style="left:4px;top:346px;height:23px;line-height:23px">1%</div>
<div class="t" style="left:67px;width:90px;text-align:right;top:346px;height:23px;line-height:23px">-7.887</div>
<div class="a" style="left:0;top:368px;width:65px;height:23px;background:#f5f5e0;border-bottom:1px solid #d4d8de"></div>
<div class="a" style="left:65px;top:368px;width:2px;height:23px;background:#c8ccd2"></div>
<div class="a" style="left:67px;top:368px;width:93px;height:23px;background:#fff;border-bottom:1px solid #d4d8de"></div>
<div class="t" style="left:4px;top:369px;height:23px;line-height:23px">2.5%</div>
<div class="t" style="left:67px;width:90px;text-align:right;top:369px;height:23px;line-height:23px">-7.067</div>
<div class="a" style="left:0;top:391px;width:65px;height:23px;background:#f5f5e0;border-bottom:1px solid #d4d8de"></div>
<div class="a" style="left:65px;top:391px;width:2px;height:23px;background:#c8ccd2"></div>
<div class="a" style="left:67px;top:391px;width:93px;height:23px;background:#fff;border-bottom:1px solid #d4d8de"></div>
<div class="t" style="left:4px;top:392px;height:23px;line-height:23px">5%</div>
<div class="t" style="left:67px;width:90px;text-align:right;top:392px;height:23px;line-height:23px">-6.215</div>
<div class="a" style="left:0;top:414px;width:65px;height:23px;background:#f5f5e0;border-bottom:1px solid #d4d8de"></div>
<div class="a" style="left:65px;top:414px;width:2px;height:23px;background:#c8ccd2"></div>
<div class="a" style="left:67px;top:414px;width:93px;height:23px;background:#fff;border-bottom:1px solid #d4d8de"></div>
<div class="t" style="left:4px;top:415px;height:23px;line-height:23px">10%</div>
<div class="t" style="left:67px;width:90px;text-align:right;top:415px;height:23px;line-height:23px">-5.067</div>
<div class="a" style="left:0;top:437px;width:65px;height:23px;background:#f5f5e0;border-bottom:1px solid #d4d8de"></div>
<div class="a" style="left:65px;top:437px;width:2px;height:23px;background:#c8ccd2"></div>
<div class="a" style="left:67px;top:437px;width:93px;height:23px;background:#fff;border-bottom:1px solid #d4d8de"></div>
<div class="t" style="left:4px;top:438px;height:23px;line-height:23px">20%</div>
<div class="t" style="left:67px;width:90px;text-align:right;top:438px;height:23px;line-height:23px">-3.468</div>
<div class="a" style="left:0;top:460px;width:65px;height:23px;background:#f5f5e0;border-bottom:1px solid #d4d8de"></div>
<div class="a" style="left:65px;top:460px;width:2px;height:23px;background:#c8ccd2"></div>
<div class="a" style="left:67px;top:460px;width:93px;height:23px;background:#fff;border-bottom:1px solid #d4d8de"></div>
<div class="t" style="left:4px;top:461px;height:23px;line-height:23px">25%</div>
<div class="t" style="left:67px;width:90px;text-align:right;top:461px;height:23px;line-height:23px">-2.811</div>
<div class="a" style="left:0;top:483px;width:65px;height:23px;background:#f5f5e0;border-bottom:1px solid #d4d8de"></div>
<div class="a" style="left:65px;top:483px;width:2px;height:23px;background:#c8ccd2"></div>
<div class="a" style="left:67px;top:483px;width:93px;height:23px;background:#fff;border-bottom:1px solid #d4d8de"></div>
<div class="t" style="left:4px;top:484px;height:23px;line-height:23px">30%</div>
<div class="t" style="left:67px;width:90px;text-align:right;top:484px;height:23px;line-height:23px">-2.204</div>
<div class="a" style="left:0;top:506px;width:65px;height:23px;background:#f5f5e0;border-bottom:1px solid #d4d8de"></div>
<div class="a" style="left:65px;top:506px;width:2px;height:23px;background:#c8ccd2"></div>
<div class="a" style="left:67px;top:506px;width:93px;height:23px;background:#fff;border-bottom:1px solid #d4d8de"></div>
<div class="t" style="left:4px;top:507px;height:23px;line-height:23px">35%</div>
<div class="t" style="left:67px;width:90px;text-align:right;top:507px;height:23px;line-height:23px">-1.620</div>
<div class="a" style="left:0;top:207px;width:160px;height:1px;background:#7c7c84"></div>
<div class="a" style="left:0;top:345px;width:160px;height:1px;background:#7c7c84"></div>
<div class="a" style="left:160px;top:23px;width:21px;height:498px;background:#f2f2f5"></div>
<svg class="a" style="left:166px;top:31px" width="9" height="6"><path d="M0,5 L4.5,0.5 L9,5Z" fill="#999"/></svg>
<svg class="a" style="left:166px;top:505px" width="9" height="6"><path d="M0,0.5 L4.5,5 L9,0.5Z" fill="#999"/></svg>
<div class="a" style="left:165px;top:44px;width:11px;height:264px;border:1px solid #c0c0c8;border-radius:5px;background:#e4e4ea"></div>
</div>
<div class="btn" style="left:11px;top:654px;width:28px;height:30px;border-radius:4px"></div>
<svg class="a" style="left:12px;top:655px" width="26" height="27"><circle cx="13" cy="13.5" r="8.4" fill="none" stroke="#1a1a1a" stroke-width="1.5"/><path d="M10.2,10.8 C10.2,8.7 11.5,8 13.1,8 C14.8,8 16,9 16,10.6 C16,12.4 13.6,12.6 13.6,15.2" fill="none" stroke="#0f6cf6" stroke-width="1.8"/><rect x="12.6" y="16.6" width="2" height="2" fill="#0f6cf6"/></svg>
<div class="btn" style="left:44px;top:654px;width:28px;height:30px;border-radius:4px"></div>
<svg class="a" style="left:44px;top:655px" width="28" height="29"><path d="M9.00,20.00 L9.00,19.50 L9.21,19.50 L9.43,19.50 L9.64,19.50 L9.86,19.50 L10.07,19.49 L10.29,19.29 L10.50,19.02 L10.72,18.68 L10.94,18.26 L11.15,17.75 L11.37,17.14 L11.58,16.45 L11.79,15.66 L12.01,14.80 L12.22,13.89 L12.44,12.93 L12.65,11.95 L12.87,10.99 L13.08,10.08 L13.30,9.22 L13.52,8.46 L13.73,7.81 L13.95,7.29 L14.16,6.89 L14.38,6.62 L14.59,6.46 L14.80,6.40 L15.02,6.40 L15.23,6.45 L15.45,6.55 L15.66,6.73 L15.88,6.98 L16.09,7.33 L16.31,7.76 L16.52,8.27 L16.74,8.86 L16.95,9.51 L17.17,10.22 L17.38,10.97 L17.60,11.75 L17.81,12.54 L18.03,13.33 L18.24,14.11 L18.46,14.85 L18.67,15.55 L18.89,16.21 L19.10,16.80 L19.32,17.34 L19.53,17.82 L19.75,18.23 L19.96,18.59 L20.18,18.88 L20.39,19.13 L20.61,19.33 L20.82,19.50 L21.04,19.50 L21.25,19.50 L21.47,19.50 L21.68,19.50 L21.90,19.50 L21.90,20.00Z" fill="#e01a2a"/><path d="M4.90,20.00 L4.90,19.50 L5.11,19.50 L5.32,19.50 L5.53,19.50 L5.74,19.50 L5.95,19.50 L6.16,19.37 L6.37,19.17 L6.58,18.92 L6.79,18.62 L7.00,18.26 L7.21,17.86 L7.42,17.41 L7.63,16.91 L7.84,16.38 L8.05,15.83 L8.26,15.26 L8.47,14.68 L8.68,14.12 L8.89,13.59 L9.10,13.09 L9.31,12.64 L9.52,12.24 L9.73,11.90 L9.94,11.63 L10.15,11.42 L10.36,11.27 L10.57,11.17 L10.78,11.12 L10.99,11.10 L11.20,11.10 L11.41,11.12 L11.62,11.17 L11.83,11.26 L12.04,11.41 L12.25,11.62 L12.46,11.89 L12.67,12.22 L12.88,12.62 L13.09,13.07 L13.30,13.56 L13.51,14.10 L13.72,14.66 L13.93,15.23 L14.14,15.80 L14.35,16.36 L14.56,16.89 L14.77,17.39 L14.98,17.84 L15.19,18.25 L15.40,18.60 L15.61,18.90 L15.82,19.16 L16.03,19.36 L16.24,19.50 L16.45,19.50 L16.66,19.50 L16.87,19.50 L17.08,19.50 L17.29,19.50 L17.50,19.50 L17.50,20.00Z" fill="#0f6cf6"/><rect x="4.9" y="21.2" width="16.9" height="1.8" fill="#3a3a3a"/></svg>
<div class="btn" style="left:77px;top:654px;width:28px;height:30px;border-radius:4px"></div>
<svg class="a" style="left:77px;top:654px" width="28" height="30"><path d="M21.70,14.60 L21.16,14.88 L20.85,15.14 L20.71,15.39 L20.63,15.65 L20.57,15.91 L20.53,16.17 L20.50,16.43 L20.53,16.72 L20.72,17.08 L21.11,17.55 L21.48,18.05 L21.60,18.47 L21.54,18.83 L21.41,19.14 L21.23,19.43 L21.03,19.71 L20.79,19.95 L20.49,20.14 L20.05,20.19 L19.44,20.04 L18.86,19.86 L18.46,19.82 L18.18,19.90 L17.94,20.03 L17.72,20.17 L17.51,20.32 L17.30,20.49 L17.12,20.72 L17.00,21.11 L16.95,21.71 L16.85,22.32 L16.64,22.71 L16.35,22.92 L16.03,23.05 L15.70,23.13 L15.36,23.18 L15.02,23.19 L14.67,23.10 L14.32,22.83 L14.00,22.30 L13.72,21.76 L13.46,21.45 L13.21,21.31 L12.95,21.23 L12.69,21.17 L12.43,21.13 L12.17,21.10 L11.88,21.13 L11.52,21.32 L11.05,21.71 L10.55,22.08 L10.13,22.20 L9.77,22.14 L9.46,22.01 L9.17,21.83 L8.89,21.63 L8.65,21.39 L8.46,21.09 L8.41,20.65 L8.56,20.04 L8.74,19.46 L8.78,19.06 L8.70,18.78 L8.57,18.54 L8.43,18.32 L8.28,18.11 L8.11,17.90 L7.88,17.72 L7.49,17.60 L6.89,17.55 L6.28,17.45 L5.89,17.24 L5.68,16.95 L5.55,16.63 L5.47,16.30 L5.42,15.96 L5.41,15.62 L5.50,15.27 L5.77,14.92 L6.30,14.60 L6.84,14.32 L7.15,14.06 L7.29,13.81 L7.37,13.55 L7.43,13.29 L7.47,13.03 L7.50,12.77 L7.47,12.48 L7.28,12.12 L6.89,11.65 L6.52,11.15 L6.40,10.73 L6.46,10.37 L6.59,10.06 L6.77,9.77 L6.97,9.49 L7.21,9.25 L7.51,9.06 L7.95,9.01 L8.56,9.16 L9.14,9.34 L9.54,9.38 L9.82,9.30 L10.06,9.17 L10.28,9.03 L10.49,8.88 L10.70,8.71 L10.88,8.48 L11.00,8.09 L11.05,7.49 L11.15,6.88 L11.36,6.49 L11.65,6.28 L11.97,6.15 L12.30,6.07 L12.64,6.02 L12.98,6.01 L13.33,6.10 L13.68,6.37 L14.00,6.90 L14.28,7.44 L14.54,7.75 L14.79,7.89 L15.05,7.97 L15.31,8.03 L15.57,8.07 L15.83,8.10 L16.12,8.07 L16.48,7.88 L16.95,7.49 L17.45,7.12 L17.87,7.00 L18.23,7.06 L18.54,7.19 L18.83,7.37 L19.11,7.57 L19.35,7.81 L19.54,8.11 L19.59,8.55 L19.44,9.16 L19.26,9.74 L19.22,10.14 L19.30,10.42 L19.43,10.66 L19.57,10.88 L19.72,11.09 L19.89,11.30 L20.12,11.48 L20.51,11.60 L21.11,11.65 L21.72,11.75 L22.11,11.96 L22.32,12.25 L22.45,12.57 L22.53,12.90 L22.58,13.24 L22.59,13.58 L22.50,13.93 L22.23,14.28Z" fill="none" stroke="#1a1a1a" stroke-width="1.25" stroke-linejoin="round"/><rect x="9.5" y="13.6" width="2" height="2" fill="#1a73e8"/><rect x="13" y="13.6" width="2" height="2" fill="#1a73e8"/><rect x="16.5" y="13.6" width="2" height="2" fill="#1a73e8"/></svg>
<div class="btn" style="left:124px;top:654px;width:28px;height:30px;border-radius:4px"></div>
<svg class="a" style="left:124px;top:655px" width="28" height="29"><path d="M5.00,20.00 L5.00,19.50 L5.28,19.50 L5.56,19.50 L5.84,19.50 L6.13,19.50 L6.41,19.50 L6.69,19.50 L6.97,19.34 L7.25,19.10 L7.54,18.80 L7.82,18.43 L8.10,17.98 L8.38,17.44 L8.66,16.81 L8.94,16.09 L9.22,15.28 L9.51,14.40 L9.79,13.45 L10.07,12.46 L10.35,11.44 L10.63,10.42 L10.91,9.44 L11.20,8.50 L11.48,7.65 L11.76,6.89 L12.04,6.25 L12.32,5.75 L12.61,5.38 L12.89,5.14 L13.17,5.02 L13.45,5.00 L13.73,5.05 L14.01,5.21 L14.29,5.49 L14.58,5.91 L14.86,6.47 L15.14,7.15 L15.42,7.94 L15.70,8.82 L15.98,9.78 L16.27,10.78 L16.55,11.80 L16.83,12.81 L17.11,13.79 L17.39,14.72 L17.67,15.57 L17.96,16.35 L18.24,17.04 L18.52,17.64 L18.80,18.15 L19.08,18.57 L19.37,18.91 L19.65,19.19 L19.93,19.41 L20.21,19.50 L20.49,19.50 L20.77,19.50 L21.05,19.50 L21.34,19.50 L21.62,19.50 L21.90,19.50 L21.90,20.00Z" fill="#0f6cf6"/><rect x="5" y="21.2" width="16.9" height="1.8" fill="#3a3a3a"/></svg>
<div class="btn" style="left:815px;top:654px;width:28px;height:30px;border-radius:4px"></div>
<svg class="a" style="left:815px;top:655px" width="28" height="29"><path d="M9.8,8.5 H5.8 V21.5 H19.6 V18.6" fill="none" stroke="#222" stroke-width="1.7"/><path d="M9,17 C9,12 12,10 17.5,10 V7.2 L22,11.5 L17.5,15.8 V13 C13,13 10.8,14.2 9,17Z" fill="none" stroke="#1a73e8" stroke-width="1.4" stroke-linejoin="round"/></svg>
<div class="btn" style="left:848px;top:654px;width:47px;height:30px;border-radius:4px"><div class="t" style="left:0;top:1px;width:45px;text-align:center;line-height:28px;font-size:12px">OK</div></div>
<div class="btn" style="left:900px;top:654px;width:47px;height:30px;border-radius:4px"><div class="t" style="left:0;top:1px;width:45px;text-align:center;line-height:28px;font-size:12px">Cancel</div></div>
</body></html>
